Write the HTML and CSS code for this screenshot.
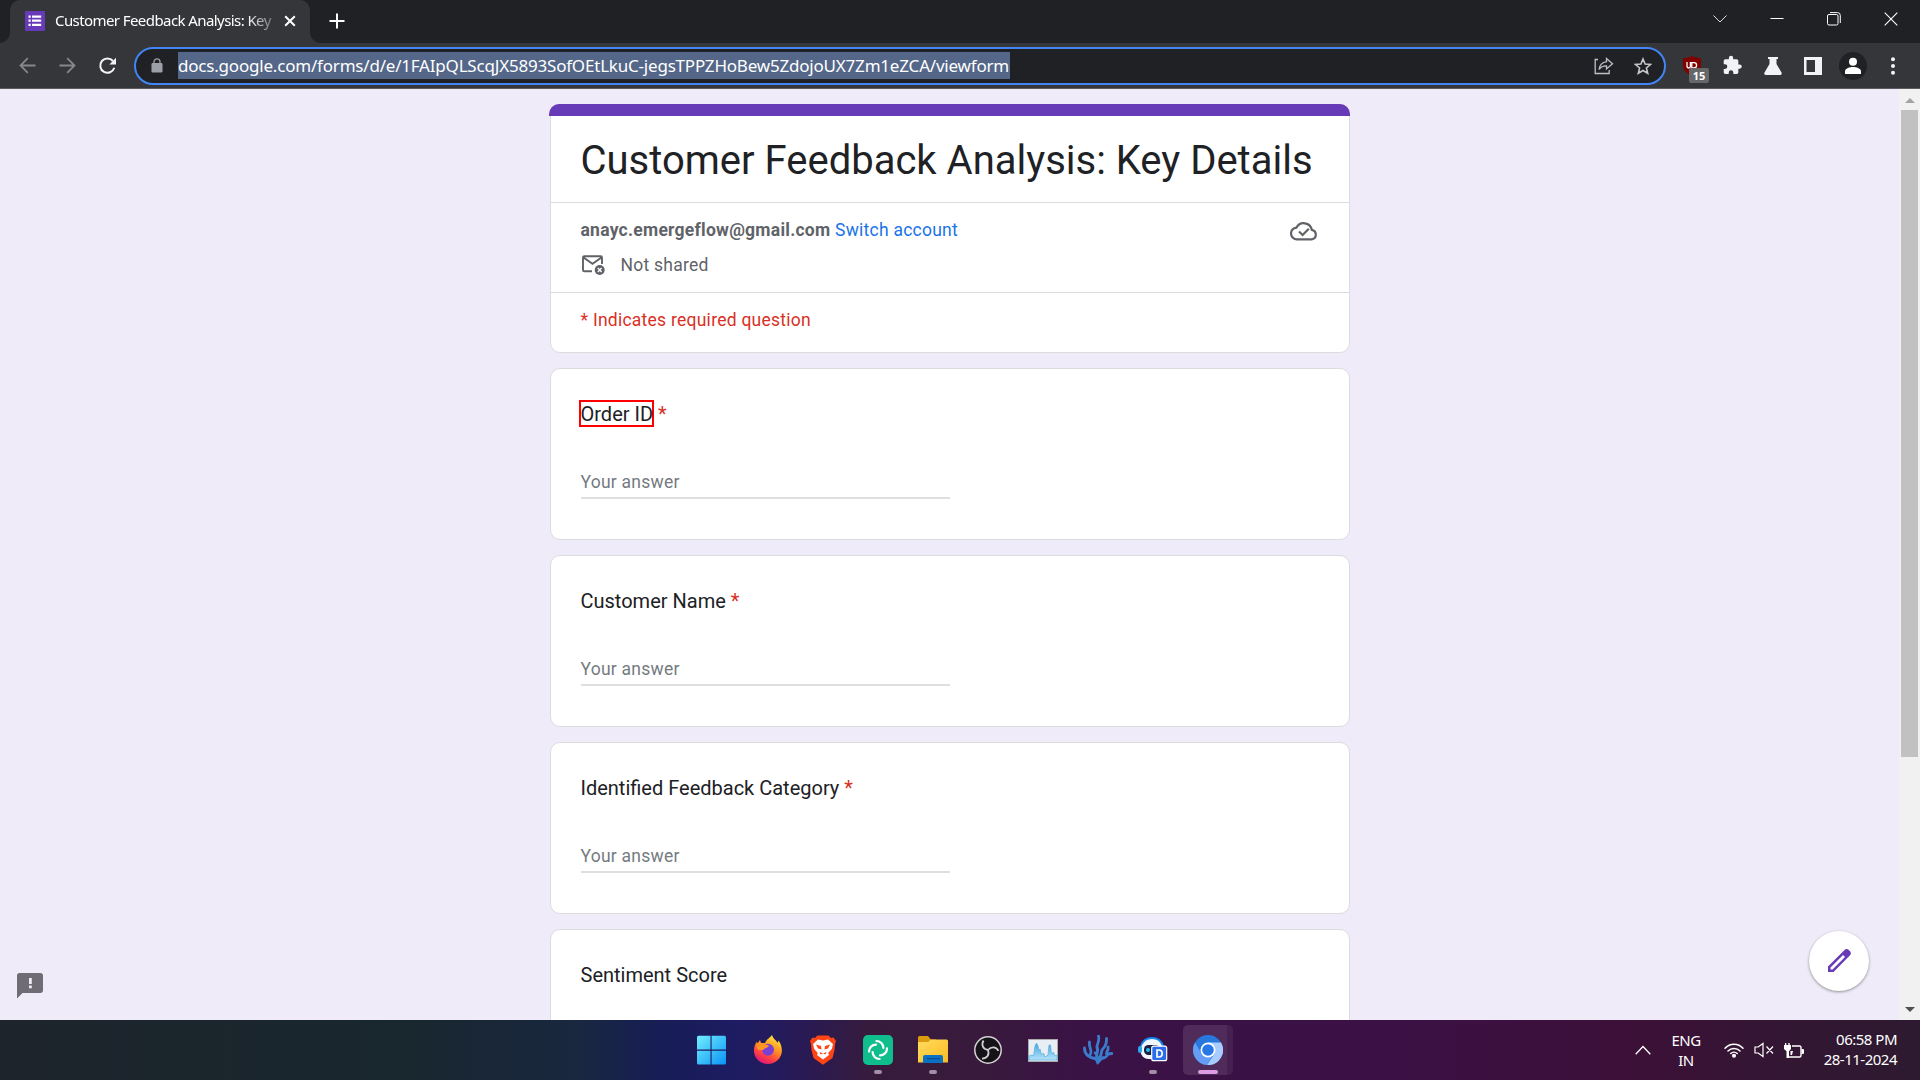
FILE: index.html
```html
<!DOCTYPE html>
<html lang="en">
<head>
<meta charset="utf-8">
<title>Customer Feedback Analysis: Key Details</title>
<link rel="stylesheet" href="styles.css">
</head>
<body>
<div class="screen">
  <header class="tabstrip">
    <div class="tab">
      <svg class="favicon" width="20" height="20" viewBox="0 0 20 20"><rect width="20" height="20" rx="1" fill="#673ab7"/><g fill="#fff"><path d="M3.500 4.500h2.200v2.200H3.500zM3.500 8.600h2.200v2.200H3.500zM3.500 12.700h2.200v2.200H3.500zM7 4.500h9.200v2.200H7zM7 8.600h9.200v2.200H7zM7 12.700h9.200v2.200H7z"/></g></svg>
      <span class="tab-title">Customer Feedback Analysis: Key</span>
      <svg class="tab-close" width="12" height="12" viewBox="0 0 12 12"><path d="M1.200 1.200l9.600 9.600M10.800 1.200l-9.600 9.600" stroke="#fff" stroke-width="2"/></svg>
    </div>
    <svg class="new-tab" width="16" height="16" viewBox="0 0 16 16"><path d="M8 .5v15M.5 8h15" stroke="#fff" stroke-width="2"/></svg>
    <div class="window-buttons">
      <svg width="14" height="14" viewBox="0 0 14 14"><path d="M.5 3.500l6.500 6.500L13.500 3.500" fill="none" stroke="#ddd" stroke-width="1"/></svg>
      <svg width="14" height="14" viewBox="0 0 14 14"><path d="M.5 6.500h13" stroke="#fff"/></svg>
      <svg width="14" height="14" viewBox="0 0 14 14" fill="none" stroke="#fff"><rect x=".5" y="2.500" width="10.500" height="10.500" rx="1.500"/><path d="M3 .6h7.500a2.800 2.800 0 0 1 2.800 2.800V11"/></svg>
      <svg width="14" height="14" viewBox="0 0 14 14"><path d="M.7.7l12.600 12.600M13.300.7L.7 13.300" stroke="#fff" stroke-width="1.100"/></svg>
    </div>
  </header>

  <nav class="toolbar">
    <div class="nav-buttons">
      <svg width="18" height="18" viewBox="0 0 18 18" fill="none" stroke="#85878a" stroke-width="1.800"><path d="M17.500 8.500H2.500M9.800 1.200L2.500 8.500l7.300 7.300"/></svg>
      <svg width="18" height="18" viewBox="0 0 18 18" fill="none" stroke="#85878a" stroke-width="1.800"><path d="M1.500 8.500h15M9.200 1.200L16.500 8.500l-7.300 7.300"/></svg>
      <svg width="18" height="18" viewBox="0 0 18 18"><path d="M15 4A7.200 7.200 0 1 0 16.300 10.800" fill="none" stroke="#f1f3f4" stroke-width="2"/><path d="M18 .8v6.600h-6.600z" fill="#f1f3f4"/></svg>
    </div>
    <div class="omnibox">
      <svg class="lock" width="12" height="15" viewBox="0 0 12 15"><rect x=".5" y="5" width="11" height="9.500" rx="1.200" fill="#9aa0a6"/><path d="M3 5.500V3.800a3 3 0 0 1 6 0v1.700" fill="none" stroke="#9aa0a6" stroke-width="1.300"/></svg>
      <span class="url">docs.google.com/forms/d/e/1FAIpQLScqJX5893SofOEtLkuC-jegsTPPZHoBew5ZdojoUX7Zm1eZCA/viewform</span>
      <svg class="share" width="20" height="18" viewBox="0 0 20 18" fill="none" stroke="#bdc1c6" stroke-width="1.300"><path d="M4 2.500H1.200v14h14V13"/><path d="M12.500 1.500l6 5.200-6 5.200V8.800c-3.800 0-5.800 1-7.500 3.700.6-4.300 3-7.200 7.500-7.900z"/></svg>
      <svg class="star" width="18" height="18" viewBox="0 0 18 18"><path d="M9 2l2.100 5 5.400.5-4.100 3.500 1.300 5.300L9 13.500l-4.700 2.800L5.600 11 1.500 7.500 6.900 7z" fill="none" stroke="#c4c7ca" stroke-width="1.600"/></svg>
    </div>
    <div class="ext ublock">
      <svg width="18" height="20" viewBox="0 0 18 20"><path d="M9 0c2.700 1.500 5.500 2.100 9 2.200V9c0 5-3.500 8.500-9 11C3.500 17.500 0 14 0 9V2.200C3.500 2.100 6.300 1.500 9 0z" fill="#800000"/><path d="M4 6v4.300a1.700 1.700 0 0 0 3.400 0V6M8.800 6v6M8.800 6.600h2.200a2.600 2.600 0 0 1 0 5.200H8.800" fill="none" stroke="#fff" stroke-width="1.300"/></svg>
      <span class="badge">15</span>
    </div>
    <svg class="ext puzzle" width="24" height="24" viewBox="0 0 24 24"><path fill="#f1f3f4" d="M20.500 11H19V7c0-1.100-.9-2-2-2h-4V3.500a2.500 2.500 0 0 0-5 0V5H4c-1.100 0-2 .9-2 2v3.800h1.500a2.700 2.700 0 0 1 0 5.400H2V20c0 1.100.9 2 2 2h3.800v-1.500a2.700 2.700 0 0 1 5.400 0V22H17c1.100 0 2-.9 2-2v-4h1.500a2.500 2.500 0 0 0 0-5z" transform="translate(2 1) scale(.86)"/></svg>
    <svg class="ext flask" width="18" height="18" viewBox="0 0 18 18"><path fill="#f1f3f4" d="M4 0h10v2h-1.500v5l5 8.500c.7 1.300 0 2.500-1.500 2.500H2C.500 18-.200 16.800.5 15.500l5-8.500V2H4z"/></svg>
    <svg class="ext panel" width="18" height="18" viewBox="0 0 18 18"><path fill="#f1f3f4" fill-rule="evenodd" d="M0 0h18v18H0zM2.500 3v12H11V3z"/></svg>
    <svg class="ext profile" width="28" height="28" viewBox="0 0 28 28"><circle cx="14" cy="14" r="14" fill="#202124"/><circle cx="14" cy="9.800" r="4" fill="#fff"/><path d="M6 22v-2.800c0-2.800 5-4.200 8-4.200s8 1.400 8 4.200V22z" fill="#fff"/></svg>
    <svg class="ext menu" width="4" height="18" viewBox="0 0 4 18" fill="#f1f3f4"><circle cx="2" cy="2.300" r="2"/><circle cx="2" cy="9" r="2"/><circle cx="2" cy="15.700" r="2"/></svg>
  </nav>

  <main class="viewport">
    <div class="page">
      <section class="card intro">
        <div class="accent"></div>
        <h1 class="form-title">Customer Feedback Analysis: Key Details</h1>
        <div class="account">
          <div class="account-lines">
            <div class="account-row"><b class="email">anayc.emergeflow@gmail.com</b> <a class="switch">Switch account</a></div>
            <div class="shared-row">
              <svg width="24" height="20" viewBox="0 0 24 20"><path d="M11 16.300H3.400c-.8 0-1.400-.6-1.400-1.400V2.600c0-.8.600-1.400 1.400-1.400h16.200c.8 0 1.400.6 1.400 1.400V9M2.500 2.500l9 6.300 9-6.300" fill="none" stroke="#5f6368" stroke-width="1.900"/><circle cx="18.700" cy="15" r="5" fill="#5f6368"/><path d="M16.800 13.100l3.800 3.800M20.600 13.100l-3.800 3.800" stroke="#fff" stroke-width="1.400"/></svg>
              <span class="not-shared">Not shared</span>
            </div>
          </div>
          <svg class="cloud" width="28" height="21" viewBox="0 0 28 21" fill="none" stroke="#5f6368" stroke-width="2.200"><path d="M7.300 19.300a5.800 5.800 0 0 1-.8-11.700 8.200 8.200 0 0 1 15.300 2.300 4.800 4.800 0 0 1 .3 9.400z"/><path d="M9 11.500l3.600 3.500 6.200-6.300"/></svg>
        </div>
        <p class="required-note">* Indicates required question</p>
      </section>

      <section class="card question">
        <h2 class="label"><span class="marked">Order ID</span> <span class="req">*</span></h2>
        <div class="answer">Your answer</div>
      </section>
      <section class="card question">
        <h2 class="label">Customer Name <span class="req">*</span></h2>
        <div class="answer">Your answer</div>
      </section>
      <section class="card question">
        <h2 class="label">Identified Feedback Category <span class="req">*</span></h2>
        <div class="answer">Your answer</div>
      </section>
      <section class="card question">
        <h2 class="label">Sentiment Score</h2>
      </section>
    </div>
    <div class="scrollbar">
      <svg width="10" height="5" viewBox="0 0 10 5"><path d="M0 5l5-5 5 5z" fill="#a3a3a3"/></svg>
      <div class="thumb"></div>
      <svg class="down" width="10" height="5" viewBox="0 0 10 5"><path d="M0 0l5 5 5-5z" fill="#505050"/></svg>
    </div>
    <svg class="report" width="26" height="26" viewBox="0 0 26 26"><path fill="#706c76" fill-rule="evenodd" d="M2.500 0h21C25 0 26 1 26 2.500v15c0 1.500-1 2.500-2.500 2.500H5.500L0 25.500v-23C0 1 1 0 2.500 0zM12 5v6h2.800V5zM12 12.500v2.800h2.800v-2.800z"/></svg>
    <div class="fab"><svg width="24" height="24" viewBox="0 0 24 24"><path fill="#673ab7" fill-rule="evenodd" d="M1 23v-5.500L17.300 1.300a3.300 3.300 0 0 1 4.700 0l.8.800a3.300 3.300 0 0 1 0 4.500L6.500 23zM3.500 20.500h2L18 8 16 6 3.500 18.500z"/></svg></div>
  </main>

  <footer class="taskbar">
    <div class="apps">
      <div class="app"><svg width="30" height="30" viewBox="0 0 30 30"><defs><linearGradient id="win" x1="0" y1="0" x2="1" y2="1"><stop offset="0" stop-color="#72eeff"/><stop offset="1" stop-color="#0a94f5"/></linearGradient></defs><path fill="url(#win)" d="M1.500.8h12v13.700H0V2.300A1.500 1.500 0 0 1 1.500.8zM14.600.8H27.500A1.500 1.500 0 0 1 29 2.300v12.200H14.600zM0 15.700h13.500v13.800h-12A1.500 1.500 0 0 1 0 28zM14.600 15.700H29V28a1.500 1.500 0 0 1-1.500 1.500H14.600z"/></svg></div>
      <div class="app"><svg width="30" height="30" viewBox="0 0 30 30"><defs><linearGradient id="fox" x1=".8" y1="0" x2=".3" y2="1"><stop offset="0" stop-color="#fff14a"/><stop offset=".4" stop-color="#ff9a1e"/><stop offset=".75" stop-color="#ff3d45"/><stop offset="1" stop-color="#d9157e"/></linearGradient></defs><path fill="url(#fox)" d="M19 0c1 4 4.500 5 5.500 8l1-2.500c3 4 4 8.500 3 13-1.500 6-7 10.500-13.500 10.500C7 29 1 23 1 15.500 1 11.500 2 9 4 6.500l.5 2L7 5l1 3h4c1.500-4 5-5 7-8z"/><circle cx="15" cy="14.800" r="6" fill="#7b3fd6"/><path fill="#ff9624" d="M3.500 9c3-2 5-1 7.500 0l5 1.500c-1 3-5 2-5.500 4.500l-5 0c-2-2-2-4-2-6z"/></svg></div>
      <div class="app"><svg width="26" height="30" viewBox="0 0 26 30"><path fill="#ff4515" d="M7.500.5h11L21 3l2.500-.5L26 6l-1 3-.5 6-2 8L13 29.700 3.500 23l-2-8L1 9 0 6l2.500-3.500L5 3z"/><path fill="#fff" d="M8 4.500l5 1 5-1L23 9l-1.200 5-3.600 4 .8 2-6 4.500L7 20l.8-2-3.600-4L3 9z"/><path fill="#ff4515" d="M6 9.500l5 1.500.5 3.500-3.500-1zM20 9.500L15 11l-.5 3.500 3.500-1zM9.500 17l3.500 1.500 3.500-1.500-1 2.500-2.500-1-2.500 1z"/></svg></div>
      <div class="app running"><svg width="30" height="30" viewBox="0 0 30 30"><rect width="30" height="30" rx="5" fill="#10bd8c"/><g fill="none" stroke="#fff" stroke-width="2.200" stroke-linecap="round"><path d="M13.400 6a7 7 0 0 1 7 7"/><path d="M13.400 6a7 7 0 0 1 7 7" transform="rotate(90 15 15)"/><path d="M13.400 6a7 7 0 0 1 7 7" transform="rotate(180 15 15)"/><path d="M13.400 6a7 7 0 0 1 7 7" transform="rotate(270 15 15)"/></g></svg></div>
      <div class="app running"><svg width="30" height="28" viewBox="0 0 30 28"><defs><linearGradient id="fold" x1="0" y1="0" x2="1" y2="1"><stop offset="0" stop-color="#ffdc5e"/><stop offset="1" stop-color="#fcbb24"/></linearGradient></defs><path fill="#dc9a0e" d="M1.500 0h8.500l3 3.500h5V12H0V1.500A1.500 1.500 0 0 1 1.500 0z"/><path fill="url(#fold)" d="M0 6h10l3-2.500h15.500A1.500 1.500 0 0 1 30 5v21.500H0z"/><path fill="#0c70c4" d="M5 27v-6a2 2 0 0 1 2-2h16a2 2 0 0 1 2 2v6z"/><path stroke="#0a4c91" stroke-width="1.200" d="M9 22.700h13"/></svg></div>
      <div class="app"><svg width="30" height="30" viewBox="0 0 30 30"><circle cx="15" cy="15" r="13.200" fill="#151317" stroke="#d5d2d5" stroke-width="1.500"/><g fill="none" stroke="#cfcdd0" stroke-width="1.800"><path d="M15 15c-5-1-7-5-4.500-9.500"/><path d="M15 15c-5-1-7-5-4.500-9.500" transform="rotate(120 15 15)"/><path d="M15 15c-5-1-7-5-4.500-9.500" transform="rotate(240 15 15)"/></g></svg></div>
      <div class="app"><svg width="30" height="23" viewBox="0 0 30 23"><defs><linearGradient id="chart" x1="0" y1="0" x2="0" y2="1"><stop offset="0" stop-color="#3da4dc"/><stop offset="1" stop-color="#b5e3fb"/></linearGradient></defs><rect x=".5" y=".5" width="29" height="22" fill="#e9eef4" stroke="#aaa"/><path fill="url(#chart)" stroke="#58afe0" stroke-width=".7" d="M1 17l3-1 1.500 1L7 7l1.500-3L10 7l1 5 1-2 1.500 6 2-2 1.500 4 3-2 1-10h1.500l1 9 2-2 1.500 4 2-1v5H1z"/></svg></div>
      <div class="app"><svg width="30" height="30" viewBox="0 0 30 30"><g fill="none" stroke="#3a7ccb" stroke-width="2.800" stroke-linecap="round" stroke-linejoin="round"><path d="M14 24C6 23 1.500 19 1.500 13M7 20C10 16 5.500 12 6.500 7M14 24c-2-4 2-7 0-11-1-2 3-7 1.500-12M12 18c3 0 3-2 2.500-5M15 24c4-3 3-6 4-9 3-3 5-6 4.500-11.500M15 24c8 0 9-3 10-5l4-.5M24 20c-2-3 2-4 1-8"/></g><path fill="#3a7ccb" d="M8 21.500l6 .5 8-1-3 4-4 4.500h-1L12 25z"/></svg></div>
      <div class="app running"><svg width="30" height="26" viewBox="0 0 30 26"><path d="M3 9C5 3 9 1 14 1s9 2 11 8" fill="#eef6ff" stroke="#1687e8" stroke-width="2"/><rect x="2.500" y="5" width="22" height="17" rx="8" fill="#f2f7ff"/><rect x="0" y="9" width="4" height="7" rx="2" fill="#2aa5f3"/><rect x="6" y="8" width="16" height="10" rx="4.500" fill="#172243"/><circle cx="10" cy="13" r="2" fill="#23bdf3"/><rect x="13.700" y="9.200" width="15" height="14.500" rx="2" fill="#2b6ceb" stroke="#fff" stroke-width="1.200"/><path d="M19 13v7h1.800c4.500 0 4.500-7 0-7z" fill="none" stroke="#fff" stroke-width="1.700"/></svg></div>
      <div class="app active"><svg width="30" height="30" viewBox="0 0 30 30"><circle cx="15" cy="15" r="15" fill="#2877dd"/><path fill="#a9ccff" d="M15 7.500h13A15 15 0 0 1 14 30l7.500-11.300z"/><path fill="#659df5" d="M2 7.500A15 15 0 0 0 14 30l5-8-10.500-3.500z"/><circle cx="15" cy="15" r="7.500" fill="#fff"/><circle cx="15" cy="15" r="5.800" fill="#2878e8"/></svg></div>
    </div>
    <div class="tray">
      <svg class="chev" width="16" height="10" viewBox="0 0 16 10"><path d="M.7 9.300L8 1.500l7.300 7.800" fill="none" stroke="#fff" stroke-width="1.300"/></svg>
      <div class="lang">ENG<br>IN</div>
      <svg class="wifi" width="20" height="16" viewBox="0 0 20 16" fill="none" stroke="#fff" stroke-width="1.500" stroke-linecap="round"><path d="M1 6.300a12 12 0 0 1 18 0M4 9a8.200 8.200 0 0 1 12 0M6.800 11.500a4.600 4.600 0 0 1 6.400 0"/><circle cx="10" cy="13.800" r="1.300" fill="#fff"/></svg>
      <svg class="sound" width="20" height="16" viewBox="0 0 20 16" fill="none" stroke="#fff" stroke-width="1.200"><path d="M1 5h3.200L9 1.500v13L4.200 11H1zM12.500 4.500l6.500 7M19 4.500l-6.500 7"/></svg>
      <svg class="battery" width="20" height="17" viewBox="0 0 20 17"><path d="M8 4h7.500A1.500 1.500 0 0 1 17 5.500v8a1.500 1.500 0 0 1-1.500 1.500H4" fill="none" stroke="#fff" stroke-width="1.400"/><path fill="#fff" d="M17.500 7H19a1 1 0 0 1 1 1v3a1 1 0 0 1-1 1h-1.500zM1 1h1.300v2h2V1h1.400v2H7v4L5 9.300V16H2.500V9.300L0 7V3h1zM6.500 9H9l-1 4H6.500z"/></svg>
      <div class="clock">06:58 PM<br>28-11-2024</div>
    </div>
  </footer>
</div>
</body>
</html>
```
FILE: styles.css
```css
* { box-sizing: border-box; }
body { margin: 0; }
svg { display: block; flex: none; }

.screen {
  width: 1920px;
  height: 1080px;
  display: flex;
  flex-direction: column;
  overflow: hidden;
  font-family: "Noto Sans", "Open Sans", sans-serif;
}

/* Tab strip */
.tabstrip {
  height: 43px;
  flex: none;
  display: flex;
  background: #202124;
  padding-left: 10px;
}
.tab {
  position: relative;
  width: 300px;
  display: flex;
  align-items: center;
  padding: 0 14px 2px 15px;
  background: #35363a;
  border-radius: 10px 10px 0 0;
}
.tab::before, .tab::after {
  content: "";
  position: absolute;
  bottom: 0;
  width: 10px;
  height: 10px;
}
.tab::before { left: -10px; background: radial-gradient(circle at 0 0, transparent 9.500px, #35363a 10px); }
.tab::after { right: -10px; background: radial-gradient(circle at 100% 0, transparent 9.500px, #35363a 10px); }
.tab-title {
  width: 220px;
  margin: 0 0 2px 10px;
  white-space: nowrap;
  font-size: 15px;
  line-height: 20px;
  letter-spacing: -.58px;
  color: #fff;
  -webkit-mask-image: linear-gradient(90deg, #000 192px, rgba(0, 0, 0, .25) 219px);
  mask-image: linear-gradient(90deg, #000 192px, rgba(0, 0, 0, .25) 219px);
}
.tab-close { margin-left: 9px; }
.new-tab { margin: 13px 0 0 19px; }
.window-buttons { display: flex; gap: 43px; margin: 12px 22px 0 auto; }

/* Toolbar */
.toolbar {
  height: 46px;
  flex: none;
  display: flex;
  align-items: center;
  background: #35363a;
  border-bottom: 1px solid #5b5c5f;
}
.nav-buttons { display: flex; gap: 22px; margin-left: 18px; }
.omnibox {
  width: 1532px;
  height: 38px;
  margin-left: 18px;
  display: flex;
  align-items: center;
  padding-left: 15px;
  border: 2px solid #4285f4;
  border-radius: 19px;
  background: #202124;
}
.url {
  height: 27px;
  width: 832px;
  margin-left: 15px;
  line-height: 27px;
  white-space: nowrap;
  font-size: 17px;
  letter-spacing: -.2px;
  color: #fff;
  background: #556788;
}
.share { margin-left: auto; }
.star { margin: 0 12px 0 20px; }
.ublock { position: relative; margin-left: 17px; }
.badge {
  position: absolute;
  left: 6px;
  top: 12px;
  width: 20px;
  height: 15px;
  border-radius: 2px;
  background: #666769;
  color: #fff;
  font-size: 11px;
  font-weight: 700;
  line-height: 15px;
  text-align: center;
}
.puzzle { margin-left: 19px; }
.flask { margin-left: 20px; }
.panel { margin-left: 22px; }
.profile { margin-left: 17px; }
.menu { margin-left: 24px; }

/* Form page */
.viewport {
  position: relative;
  height: 931px;
  flex: none;
  display: flex;
  overflow: hidden;
  background: #f0ebf8;
}
.page {
  width: 1899px;
  display: flex;
  flex-direction: column;
  align-items: center;
  gap: 15px;
  padding-top: 15px;
  font-family: Roboto, sans-serif;
}
.card {
  width: 800px;
  flex: none;
  border: 1px solid #dadce0;
  border-radius: 10px;
  background: #fff;
}
.intro { position: relative; height: 249px; padding-top: 11px; }
.accent {
  position: absolute;
  left: -2px;
  top: -1px;
  width: 801px;
  height: 12px;
  border-radius: 10px 10px 0 0;
  background: #673ab7;
}
.form-title {
  height: 87px;
  margin: 0;
  padding: 20px 0 0 30px;
  border-bottom: 1px solid #dadce0;
  font-size: 40px;
  font-weight: 400;
  line-height: 50px;
  white-space: nowrap;
  color: #202124;
}
.account {
  height: 90px;
  display: flex;
  justify-content: space-between;
  padding: 15px 31px 0 30px;
  border-bottom: 1px solid #dadce0;
  color: #5f6368;
}
.account-row, .shared-row { height: 25px; line-height: 25px; font-size: 17.500px; letter-spacing: .25px; white-space: nowrap; }
.shared-row { display: flex; align-items: center; gap: 16px; margin-top: 10px; }
.shared-row svg { margin-top: -1px; }
.switch { color: #1a73e8; }
.cloud { margin-top: 2px; }
.required-note { margin: 0; padding: 15px 0 0 30px; line-height: 25px; font-size: 17.500px; letter-spacing: .25px; color: #d93025; }

.question { height: 172px; padding: 30px 30px 0; }
.label { height: 30px; margin: 0; font-size: 20px; font-weight: 400; line-height: 30px; color: #202124; white-space: nowrap; }
.req { color: #d93025; }
.marked { display: inline-block; width: 71px; height: 23px; margin-right: 1.500px; line-height: 25px; box-shadow: 0 0 0 2px #f00; }
.answer {
  width: 369px;
  height: 32px;
  margin-top: 38px;
  border-bottom: 2px solid #dfdfe0;
  font-size: 17.500px;
  line-height: 30px;
  letter-spacing: .25px;
  color: #757b80;
}

.scrollbar {
  width: 21px;
  display: flex;
  flex-direction: column;
  align-items: center;
  background: #f1f1f1;
  padding: 9px 0 8px;
}
.thumb { width: 17px; height: 647px; margin-top: 7px; background: #c1c1c1; }
.down { margin-top: auto; }
.report { position: absolute; left: 17px; top: 884px; }
.fab {
  position: absolute;
  left: 1809px;
  top: 842px;
  width: 60px;
  height: 60px;
  display: grid;
  place-items: center;
  border-radius: 50%;
  background: #fff;
  box-shadow: 0 1px 3px rgba(0, 0, 0, .4);
}

/* Taskbar */
.taskbar {
  position: relative;
  height: 60px;
  display: flex;
  justify-content: space-between;
  background: linear-gradient(90deg, #1d242c 0, #19272e 400px, #192740 580px, #171d55 660px, #1e1c63 740px, #281a55 800px, #371b3d 870px, #381a3c 980px, #3a1246 1090px, #3b1145 1400px, #3c1038 1630px, #331633 1780px, #2d1a30 1920px);
}
.apps { display: flex; gap: 5px; margin-left: 687px; }
.app {
  position: relative;
  width: 50px;
  height: 50px;
  margin-top: 5px;
  display: grid;
  place-items: center;
}
.app:nth-child(n+2) { left: 1px; }
.running::after, .active::after {
  content: "";
  position: absolute;
  left: 21px;
  bottom: 1px;
  width: 8px;
  height: 4px;
  border-radius: 2px;
  background: #a08fa6;
}
.active { border-radius: 5px; background: linear-gradient(90deg, rgba(255, 255, 255, .11) 44px, rgba(255, 255, 255, .06) 44px); }
.active::after { left: 15px; width: 20px; background: #dc9ce4; }
.tray { display: flex; align-items: center; color: #fff; font-size: 15px; line-height: 20px; }
.chev { margin-right: 1px; }
.lang { width: 30px; margin-left: 19px; text-align: center; letter-spacing: -.5px; }
.wifi { margin-left: 23px; }
.sound { margin-left: 10px; }
.battery { margin-left: 10px; }
.clock { width: 90px; margin: -2px 23px 0 3px; text-align: right; letter-spacing: -.5px; white-space: nowrap; }
```
